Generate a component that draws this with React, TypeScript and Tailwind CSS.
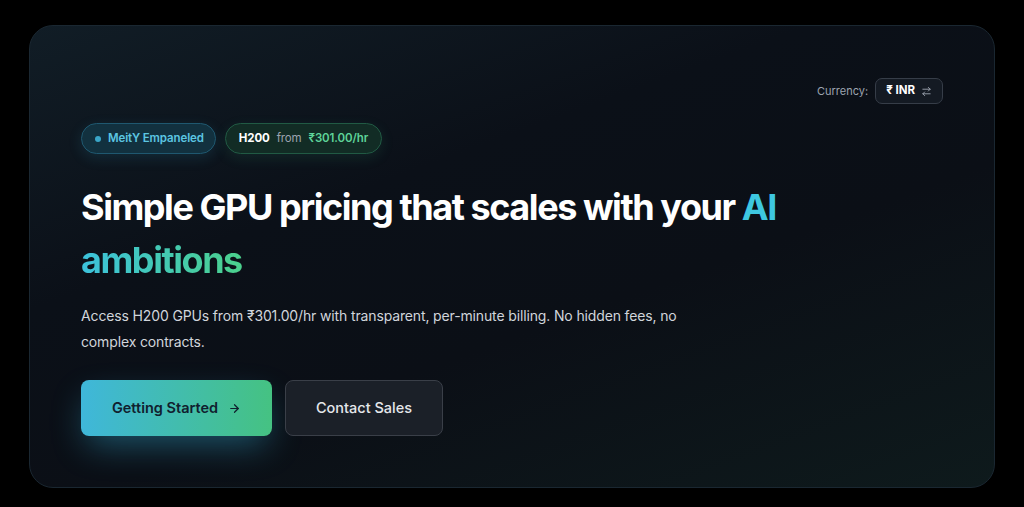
import React from "react";
import { ArrowRight, ArrowRightLeft } from "lucide-react";

export default function App() {
  return (
    <div className="min-h-[507px] w-full bg-black px-[29px] pt-[25px] pb-[20px] font-['Inter',sans-serif]">
      <div className="flex flex-col rounded-[24px] border border-[#1a2731] bg-[linear-gradient(160deg,#111d26_0%,#0b1018_35%,#0b0f16_60%,#0e1a1c_100%)] px-[51px] pt-[52px] pb-[51px]">
        <div className="flex items-center justify-end gap-[7px]">
          <span className="text-[11px] text-[#9ca3af]">Currency:</span>
          <button className="flex h-[26px] items-center gap-[6px] rounded-[7px] border border-[#363d48] bg-[#141a23] px-[10px] text-[11.5px] font-bold text-white">
            <span>₹ INR</span>
            <ArrowRightLeft className="h-[11px] w-[11px] text-[#9ca3af]" strokeWidth={2} />
          </button>
        </div>

        <div className="mt-[19px] flex items-center gap-[9px]">
          <div className="flex h-[31px] items-center gap-[7px] rounded-full border border-[#1f5870] bg-[#12313f] pl-[13px] pr-[11px] text-[11.5px] font-semibold tracking-[-0.01em] text-[#5cc6e2] shadow-[0_4px_14px_rgba(56,170,210,0.15)]">
            <span className="h-[6px] w-[6px] rounded-full bg-[#3aa6c8]" />
            MeitY Empaneled
          </div>
          <div className="flex h-[31px] items-center gap-[7px] rounded-full border border-[#215a44] bg-[#122c25] px-[13px] text-[11.5px] tracking-[-0.01em] shadow-[0_4px_14px_rgba(60,190,130,0.12)]">
            <span className="font-bold text-white">H200</span>
            <span className="text-[#9ca3af]">from</span>
            <span className="font-semibold text-[#5ed49a]">₹301.00/hr</span>
          </div>
        </div>

        <h1 className="mt-[27px] text-[36px] font-bold leading-[53px] tracking-[-0.04em] text-white">
          Simple GPU pricing that scales with your{" "}
          <span className="text-[#3ec7e0]">AI</span>
          <br />
          <span className="bg-[linear-gradient(90deg,#3cc2dc,#4bd08c)] bg-clip-text text-transparent">
            ambitions
          </span>
        </h1>

        <p className="mt-[16px] max-w-[610px] text-[14px] leading-[26px] tracking-[-0.01em] text-[#d1d5db]">
          Access H200 GPUs from ₹301.00/hr with transparent, per-minute billing. No hidden fees, no complex contracts.
        </p>

        <div className="mt-[25px] flex items-center gap-[13px]">
          <button className="flex h-[56px] w-[191px] items-center justify-center gap-[10px] rounded-[8px] bg-[linear-gradient(90deg,#3fb7da,#45c282)] text-[14.5px] font-semibold text-[#10202e] shadow-[0_14px_34px_-6px_rgba(52,170,210,0.45)]">
            Getting Started
            <ArrowRight className="h-[13px] w-[13px]" strokeWidth={2.25} />
          </button>
          <button className="flex h-[56px] w-[158px] items-center justify-center rounded-[8px] border border-[#3a3f48] bg-[#1b2028] text-[14.5px] font-medium text-[#e5e7eb]">
            Contact Sales
          </button>
        </div>
      </div>
    </div>
  );
}
